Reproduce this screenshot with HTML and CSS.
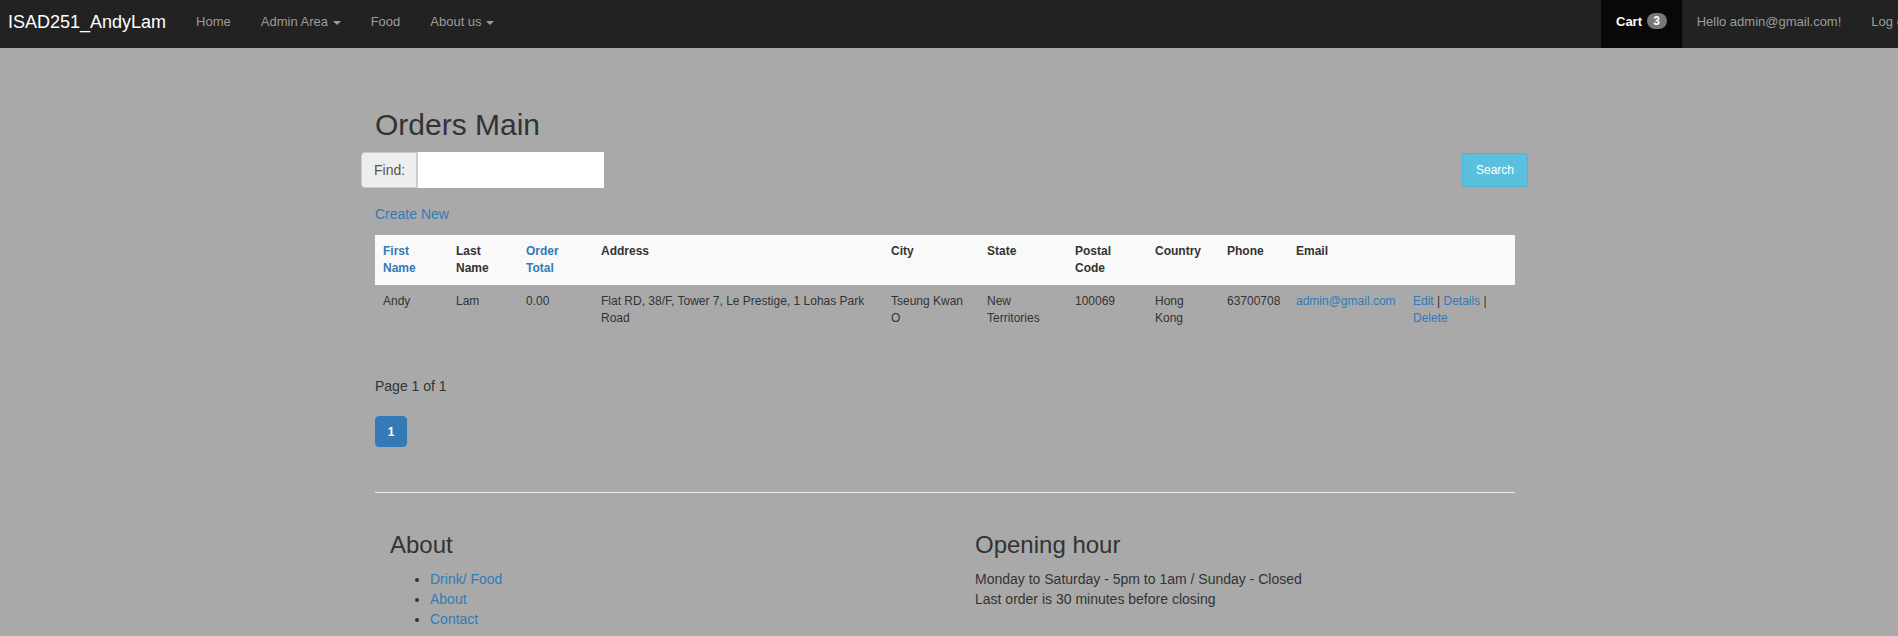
FILE: index.html
```html
<!DOCTYPE html>
<html lang="en">
<head>
<meta charset="utf-8">
<title>Orders Main</title>
<link rel="stylesheet" href="styles.css">
</head>
<body>
<nav class="navbar">
  <div class="nav-left">
    <a class="brand" href="#">ISAD251_AndyLam</a>
    <a class="nav-link" href="#">Home</a>
    <a class="nav-link" href="#">Admin Area <span class="caret"></span></a>
    <a class="nav-link" href="#">Food</a>
    <a class="nav-link" href="#">About us <span class="caret"></span></a>
  </div>
  <div class="nav-right">
    <a class="nav-link cart" href="#">Cart <span class="badge">3</span></a>
    <a class="nav-link" href="#">Hello admin@gmail.com!</a>
    <a class="nav-link" href="#">Log out</a>
  </div>
</nav>

<div class="page">
  <div class="container">
    <h2 class="title">Orders Main</h2>
    <form class="search-row">
      <div class="input-group">
        <span class="addon">Find:</span>
        <input class="find-input" type="text">
      </div>
      <button class="btn-search" type="button">Search</button>
    </form>
    <p class="create"><a href="#">Create New</a></p>

    <table class="orders">
      <colgroup>
        <col class="w-first"><col class="w-last"><col class="w-total"><col class="w-address">
        <col class="w-city"><col class="w-state"><col class="w-postal"><col class="w-country">
        <col class="w-phone"><col class="w-email"><col class="w-actions">
      </colgroup>
      <thead>
        <tr>
          <th><a href="#">First Name</a></th>
          <th>Last Name</th>
          <th><a href="#">Order Total</a></th>
          <th>Address</th>
          <th>City</th>
          <th>State</th>
          <th>Postal Code</th>
          <th>Country</th>
          <th>Phone</th>
          <th>Email</th>
          <th></th>
        </tr>
      </thead>
      <tbody>
        <tr>
          <td>Andy</td>
          <td>Lam</td>
          <td>0.00</td>
          <td>Flat RD, 38/F, Tower 7, Le Prestige, 1 Lohas Park Road</td>
          <td>Tseung Kwan O</td>
          <td>New Territories</td>
          <td>100069</td>
          <td>Hong Kong</td>
          <td>63700708</td>
          <td><a href="#">admin@gmail.com</a></td>
          <td><a href="#">Edit</a> | <a href="#">Details</a> | <a href="#">Delete</a></td>
        </tr>
      </tbody>
    </table>

    <p class="page-info">Page 1 of 1</p>
    <ul class="pagination">
      <li><a class="active" href="#">1</a></li>
    </ul>

    <hr class="divider">
  </div>

  <footer class="footer">
    <div class="footer-col">
      <h3>About</h3>
      <ul class="footer-links">
        <li><a href="#">Drink/ Food</a></li>
        <li><a href="#">About</a></li>
        <li><a href="#">Contact</a></li>
      </ul>
    </div>
    <div class="footer-col">
      <h3>Opening hour</h3>
      <p>Monday to Saturday - 5pm to 1am / Sunday - Closed<br>Last order is 30 minutes before closing</p>
    </div>
  </footer>
</div>
</body>
</html>
```

FILE: styles.css
```css
* { box-sizing: border-box; }

html, body {
  margin: 0;
  padding: 0;
}

body {
  background: #a9a9a9;
  color: #333;
  font-family: "Liberation Sans", Arial, sans-serif;
  font-size: 14px;
  line-height: 20px;
  overflow: hidden;
}

a { color: #337ab7; text-decoration: none; }

/* ---------- navbar ---------- */
.navbar {
  display: flex;
  height: 48px;
  background: #222;
  white-space: nowrap;
  overflow: hidden;
}

.nav-left {
  display: flex;
  flex: 0 0 1601px;
}

.nav-right {
  display: flex;
  flex: 0 0 auto;
}

.brand {
  color: #fff;
  font-size: 18px;
  line-height: 20px;
  padding: 12px 15px 16px 8px;
}

.nav-link {
  color: #9d9d9d;
  font-size: 13px;
  line-height: 20px;
  padding: 12px 15px 16px 15px;
}

.caret {
  display: inline-block;
  width: 0;
  height: 0;
  margin-left: 1px;
  vertical-align: middle;
  border-top: 4px solid;
  border-left: 4px solid transparent;
  border-right: 4px solid transparent;
}

.cart {
  background: #080808;
  color: #fff;
  font-weight: bold;
}

.badge {
  display: inline-block;
  min-width: 20px;
  padding: 2px 6px;
  margin-left: 1px;
  font-size: 12px;
  font-weight: bold;
  line-height: 12px;
  color: #fff;
  text-align: center;
  background: #777;
  border-radius: 10px;
  vertical-align: 1px;
}

/* ---------- main ---------- */
.page {
  padding-right: 8px;
}

.container {
  width: 1140px;
  margin: 0 auto;
}

.title {
  margin: 60px 0 11px;
  font-size: 30px;
  font-weight: normal;
  line-height: 33px;
  color: #333;
}

.search-row {
  display: flex;
  align-items: center;
  justify-content: space-between;
  margin: 0 -14px;
  height: 36px;
}

.input-group {
  display: flex;
  height: 36px;
}

.addon {
  width: 56px;
  padding: 7px 12px;
  font-size: 14px;
  line-height: 20px;
  color: #555;
  background: #eee;
  border: 1px solid #ccc;
  border-radius: 4px 0 0 4px;
}

.find-input {
  width: 187px;
  height: 36px;
  margin: 0;
  padding: 6px 12px;
  border: 1px solid #fff;
  border-left: 1px solid #ccc;
  background: #fff;
  font: inherit;
  outline: none;
}

.btn-search {
  width: 66px;
  height: 34px;
  padding: 0;
  margin-right: 1px;
  background: #5bc0de;
  border: 1px solid #46b8da;
  border-radius: 3px;
  color: #fff;
  font-family: "Liberation Sans", Arial, sans-serif;
  font-size: 12px;
}

.create {
  margin: 16px 0 11px;
}

/* ---------- table ---------- */
.orders {
  width: 1140px;
  table-layout: fixed;
  border-collapse: collapse;
  font-size: 12px;
  line-height: 17px;
}

.w-first { width: 73px; }
.w-last { width: 70px; }
.w-total { width: 75px; }
.w-address { width: 290px; }
.w-city { width: 96px; }
.w-state { width: 88px; }
.w-postal { width: 80px; }
.w-country { width: 72px; }
.w-phone { width: 69px; }
.w-email { width: 117px; }
.w-actions { width: 110px; }

.orders th {
  background: #f9f9f9;
  padding: 8px;
  text-align: left;
  vertical-align: top;
  font-weight: bold;
  color: #333;
}

.orders td {
  padding: 8px;
  vertical-align: top;
  color: #333;
}

/* ---------- pagination ---------- */
.page-info {
  margin: 41px 0 0;
}

.pagination {
  display: flex;
  list-style: none;
  margin: 20px 0 0;
  padding: 0;
}

.pagination a {
  display: block;
  width: 32px;
  height: 31px;
  padding: 7px 0;
  text-align: center;
  font-size: 12px;
  font-weight: bold;
  line-height: 17px;
  color: #fff;
  background: #337ab7;
  border: 1px solid #337ab7;
  border-radius: 4px;
}

.divider {
  margin: 45px 0 0;
  border: 0;
  border-top: 1px solid #eee;
  height: 0;
}

/* ---------- footer ---------- */
.footer {
  display: grid;
  grid-template-columns: 585px 585px;
  width: 1170px;
  margin: 0 auto;
  padding-top: 39px;
}

.footer-col {
  padding-left: 30px;
}

.footer h3 {
  margin: 0 0 11px;
  font-size: 24px;
  font-weight: normal;
  line-height: 26px;
  color: #333;
}

.footer p {
  margin: 0;
}

.footer-links {
  margin: 0;
  padding-left: 40px;
}
```
